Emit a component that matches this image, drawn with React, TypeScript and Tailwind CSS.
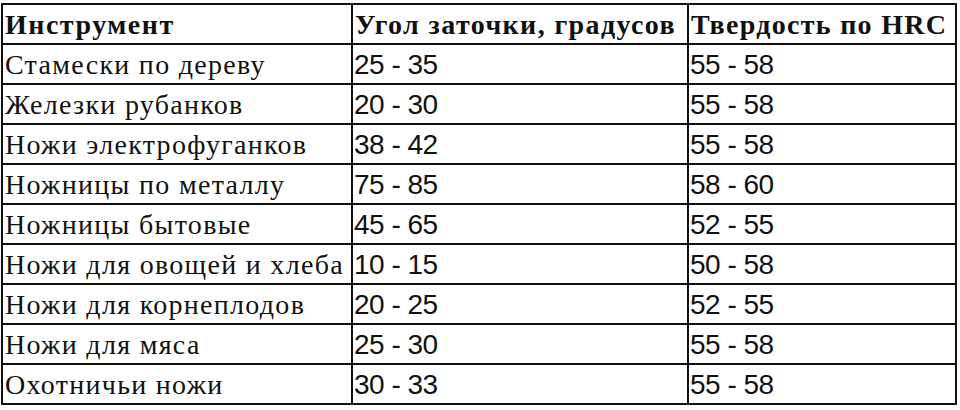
import React from "react";

const rows: [string, string, string][] = [
  ["Стамески по дереву", "25 - 35", "55 - 58"],
  ["Железки рубанков", "20 - 30", "55 - 58"],
  ["Ножи электрофуганков", "38 - 42", "55 - 58"],
  ["Ножницы по металлу", "75 - 85", "58 - 60"],
  ["Ножницы бытовые", "45 - 65", "52 - 55"],
  ["Ножи для овощей и хлеба", "10 - 15", "50 - 58"],
  ["Ножи для корнеплодов", "20 - 25", "52 - 55"],
  ["Ножи для мяса", "25 - 30", "55 - 58"],
  ["Охотничьи ножи", "30 - 33", "55 - 58"],
];

const serif = "font-['Liberation_Serif','Times_New_Roman',serif]";
const sans = "font-['Liberation_Sans',Arial,sans-serif]";
const cell = "h-10 border-r-2 border-b-2 border-[#111] flex items-center overflow-hidden whitespace-nowrap";

export default function App() {
  return (
    <div className="w-[960px] h-[410px] bg-white text-[#111] pt-[3px] pl-px">
      <div className="grid grid-cols-[350px_336px_268px] w-[956px] border-l-2 border-t-2 border-[#111]">
        <div className={`${cell} ${serif} pl-[2px] pt-[1px] text-[28px] font-bold tracking-[1.5px]`}>Инструмент</div>
        <div className={`${cell} ${serif} pl-[2px] pt-[1px] text-[28px] font-bold tracking-[1.4px]`}>Угол заточки, градусов</div>
        <div className={`${cell} ${serif} pl-[2px] pt-[1px] text-[28px] font-bold tracking-[1.3px]`}>Твердость по HRC</div>
        {rows.map(([tool, angle, hrc]) => (
          <React.Fragment key={tool}>
            <div className={`${cell} ${serif} pl-[2px] pt-[2px] text-[28px] tracking-[1.3px]`}>{tool}</div>
            <div className={`${cell} ${sans} pl-[1px] pt-[2px] text-[28px] tracking-[-0.5px]`}>{angle}</div>
            <div className={`${cell} ${sans} pl-[1px] pt-[2px] text-[28px] tracking-[-0.5px]`}>{hrc}</div>
          </React.Fragment>
        ))}
      </div>
    </div>
  );
}
